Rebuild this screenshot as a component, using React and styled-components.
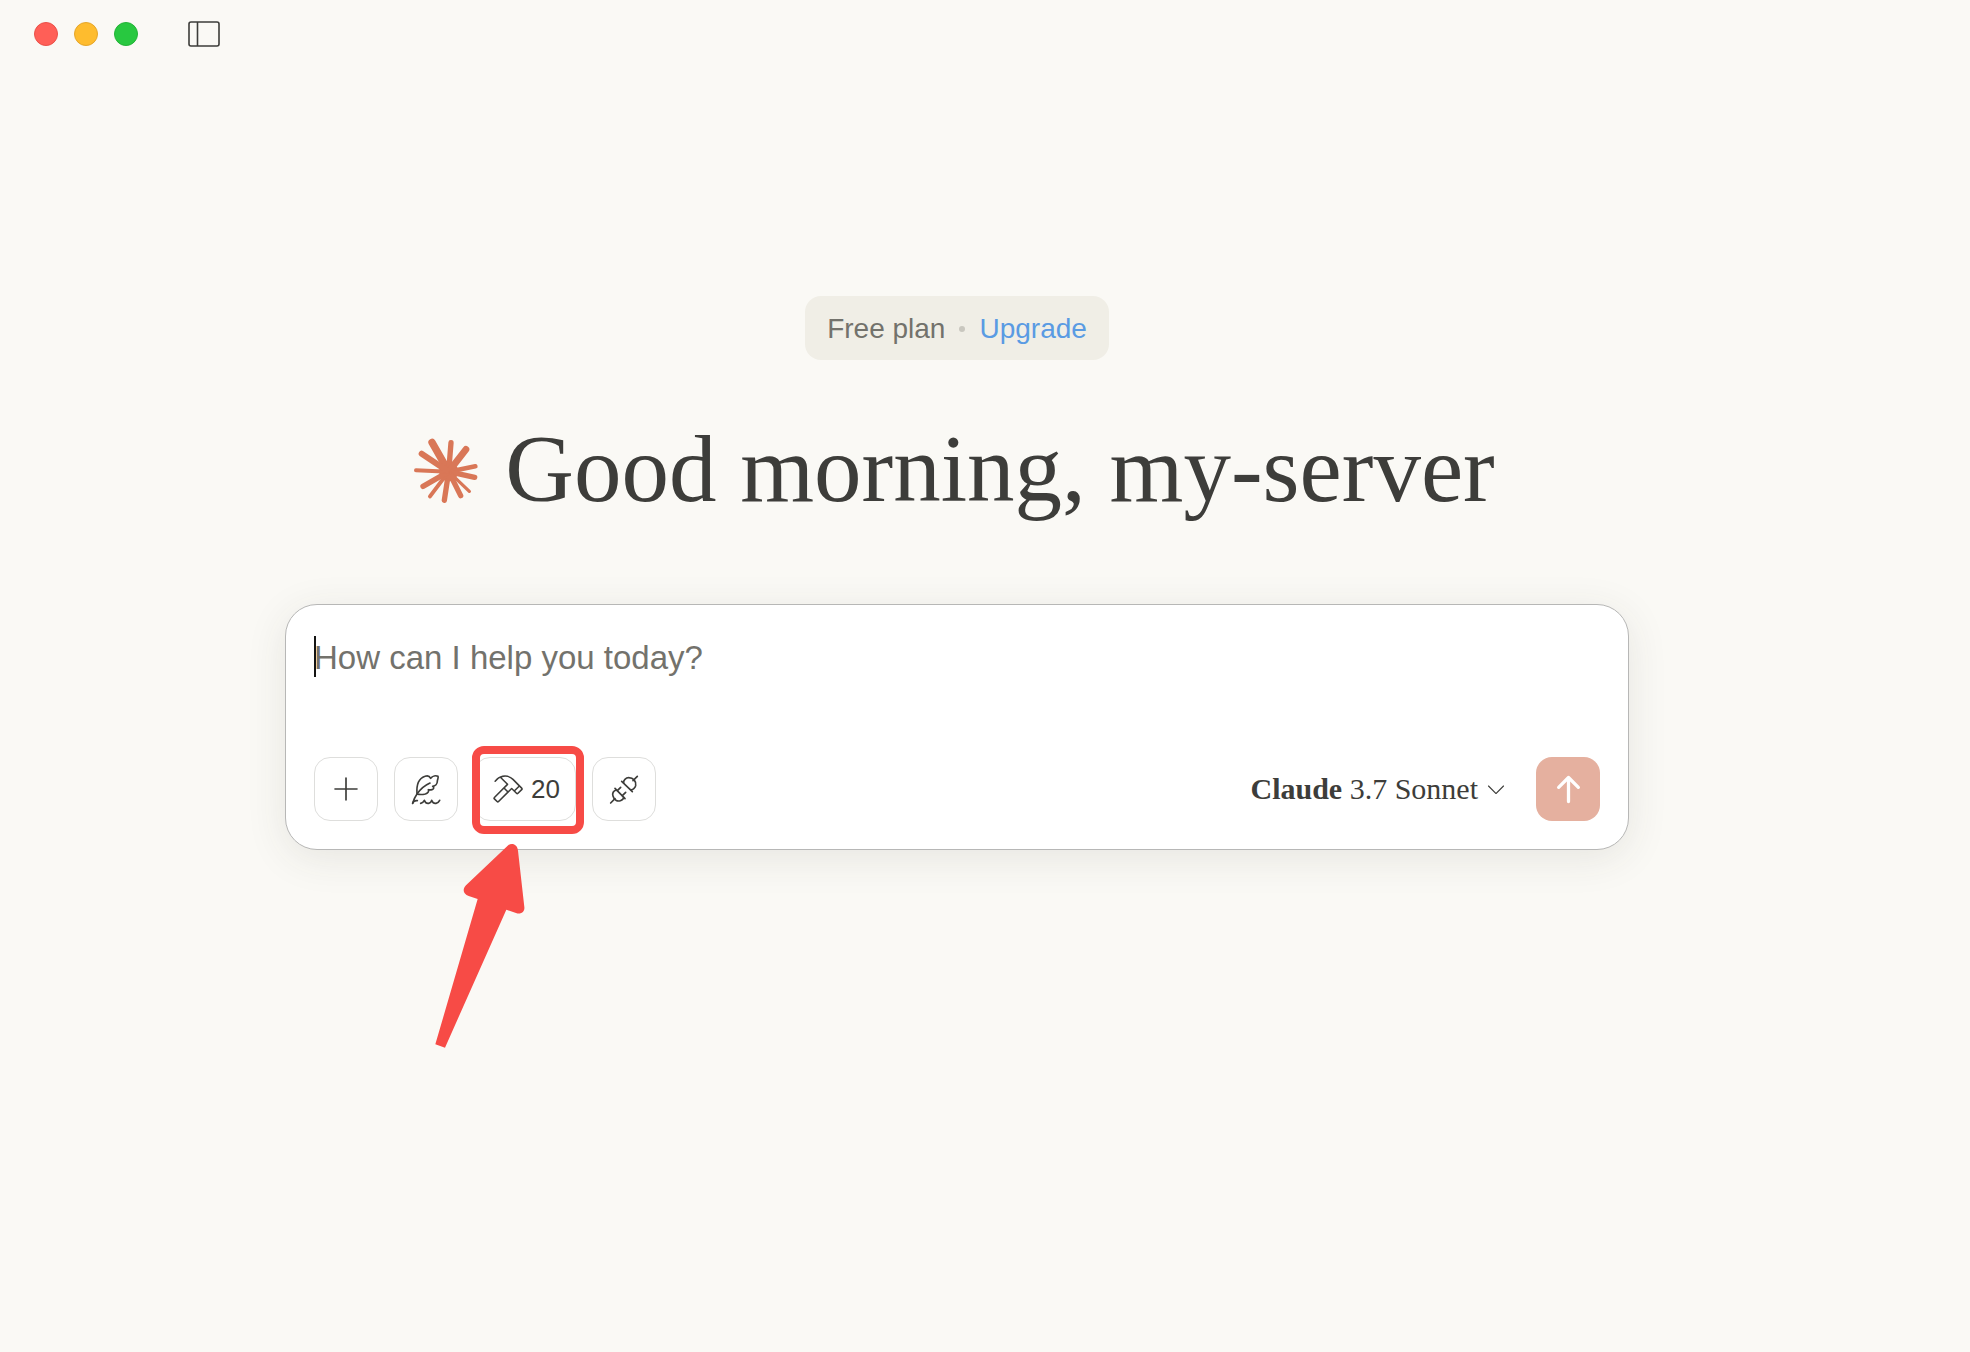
import React, { useState } from "react";
import styled, { createGlobalStyle } from "styled-components";
import { PiArrowUpBold, PiCaretDownLight, PiHammerLight } from "react-icons/pi";

const GlobalStyle = createGlobalStyle`
  * {
    box-sizing: border-box;
  }
  body {
    margin: 0;
    background-color: #faf9f5;
    color: #3d3d3a;
    font-family: "Liberation Sans", Arial, sans-serif;
  }
`;

const Window = styled.div`
  display: flex;
  flex-direction: column;
  min-height: 100vh;
`;

const TitleBar = styled.header`
  display: flex;
  align-items: center;
  height: 68px;
  padding: 0 34px;
`;

const Lights = styled.div`
  display: flex;
  gap: 16px;
  margin-right: 50px;
`;

const Light = styled.button`
  width: 24px;
  height: 24px;
  padding: 0;
  border: 1px solid ${(props) => props.$edge};
  border-radius: 50%;
  background-color: ${(props) => props.$color};
`;

const PlainButton = styled.button`
  display: flex;
  align-items: center;
  padding: 0;
  border: none;
  background: none;
  color: inherit;
  cursor: pointer;
`;

const Main = styled.main`
  display: flex;
  flex-direction: column;
  align-items: center;
  padding: 228px 56px 0 0;
`;

const PlanBadge = styled.div`
  display: flex;
  align-items: center;
  gap: 14px;
  height: 64px;
  padding: 2px 22px 0;
  border-radius: 16px;
  background-color: #f0eee6;
  color: #73726c;
  font-size: 28px;
`;

const Dot = styled.span`
  width: 6px;
  height: 6px;
  border-radius: 50%;
  background-color: #c9c7bf;
`;

const UpgradeLink = styled.a`
  color: #5a9be3;
  text-decoration: none;
`;

const Greeting = styled.div`
  display: flex;
  align-items: center;
  gap: 24px;
  margin: 48px 0 74px;
  padding-right: 6px;
`;

const Title = styled.h1`
  margin: 0;
  font-family: "Liberation Serif", "Times New Roman", serif;
  font-size: 95px;
  font-weight: 400;
  line-height: 122px;
  white-space: nowrap;
`;

const Composer = styled.form`
  width: 100%;
  max-width: 1344px;
  padding: 28px;
  border: 1px solid #b7b7b6;
  border-radius: 32px;
  background-color: #fff;
  box-shadow: 0 8px 40px rgba(61, 61, 50, 0.1);
`;

const Field = styled.div`
  position: relative;
  height: 124px;
`;

const Prompt = styled.textarea`
  display: block;
  width: 100%;
  height: 50px;
  padding: 0;
  border: none;
  outline: none;
  resize: none;
  background: none;
  color: #3d3d3a;
  font-family: inherit;
  font-size: 33px;
  line-height: 50px;

  &::placeholder {
    color: #73726c;
    opacity: 1;
  }
`;

const Caret = styled.span`
  position: absolute;
  top: 3px;
  left: 0;
  width: 2px;
  height: 41px;
  background-color: #141413;
`;

const Toolbar = styled.div`
  display: flex;
  align-items: center;
  justify-content: space-between;
`;

const Group = styled.div`
  display: flex;
  align-items: center;
  gap: ${(props) => props.$gap};
`;

const ToolButton = styled.button`
  display: flex;
  align-items: center;
  justify-content: center;
  gap: 8px;
  width: ${(props) => (props.$wide ? "102px" : "64px")};
  height: 64px;
  padding: 0;
  border: 1px solid #dededc;
  border-radius: 16px;
  background-color: #fff;
  color: #3d3d3a;
  font-family: inherit;
  font-size: 26px;
  cursor: pointer;
`;

const Marked = styled.div`
  position: relative;
`;

const MarkBox = styled.span`
  position: absolute;
  inset: -11px -8px -13px -2px;
  border: 8px solid #f74b46;
  border-radius: 12px;
  pointer-events: none;
`;

const MarkArrow = styled.svg`
  position: absolute;
  top: 83px;
  left: -44px;
  pointer-events: none;
`;

const ModelButton = styled(PlainButton)`
  gap: 6px;
  font-family: "Liberation Serif", "Times New Roman", serif;
  font-size: 30px;
`;

const SendButton = styled.button`
  display: flex;
  align-items: center;
  justify-content: center;
  width: 64px;
  height: 64px;
  padding: 0;
  border: none;
  border-radius: 16px;
  background-color: #e5b09f;
  color: #fff;
  cursor: pointer;
`;

// x and y of the tip, then the radius of its round end
const rays = [
  [97, 70, 11],
  [154, 71, 8],
  [199, 91, 10],
  [227, 142, 7],
  [225, 175, 8],
  [209, 217, 5],
  [183, 230, 8],
  [134, 244, 8],
  [91, 232, 6],
  [70, 202, 8],
  [49, 154, 6],
  [66, 104, 9],
];
const hub = [147, 158];

const rayPath = ([x, y, r]) => {
  const dx = x - hub[0];
  const dy = y - hub[1];
  const len = Math.hypot(dx, dy);
  const nx = -dy / len;
  const ny = dx / len;
  return `M${hub[0] + nx * r} ${hub[1] + ny * r} L${x + nx * r} ${y + ny * r}
    A${r} ${r} 0 0 0 ${x - nx * r} ${y - ny * r}
    L${hub[0] - nx * r} ${hub[1] - ny * r}Z`;
};

const Starburst = () => (
  <svg width="68" height="68" viewBox="40 48 204 204" fill="#d97757" aria-hidden="true">
    <circle cx={hub[0]} cy={hub[1]} r="29" />
    {rays.map((ray) => (
      <path key={ray[0]} d={rayPath(ray)} />
    ))}
  </svg>
);

const SidebarIcon = () => (
  <svg width="32" height="26" viewBox="0 0 32 26" fill="none" stroke="#3d3d3a" strokeWidth="1.6" aria-hidden="true">
    <rect x="1" y="1" width="30" height="24" rx="2" />
    <path d="M9.5 1v24" />
  </svg>
);

const LineIcon = ({ children }) => (
  <svg
    width="36"
    height="36"
    viewBox="0 0 108 108"
    fill="none"
    stroke="currentColor"
    strokeWidth="5"
    strokeLinecap="round"
    strokeLinejoin="round"
    aria-hidden="true"
  >
    {children}
  </svg>
);

const PlusIcon = () => (
  <LineIcon>
    <path d="M54 21v66M21 54h66" />
  </LineIcon>
);

const QuillIcon = () => (
  <LineIcon>
    <path d="M14 97C17 87 21 77 27 69C38 53 50 43 66 36" />
    <path d="M27 69C25 43 33 22 51 16C59 13 65 16 68 22C74 14 84 13 90 16C92 21 88 26 88 31C88 38 82 45 74 46C79 49 78 54 72 56C68 57 64 57 61 56C64 62 59 67 52 69C43 71 34 71 27 69Z" />
    <path d="M14 97C16 91 20 88 28 89" />
    <path d="M38 97C43 96 47 92 49 88C52 95 57 98 62 97C67 96 70 92 71 88C74 95 79 98 84 97C89 96 93 92 95 88" />
  </LineIcon>
);

const PlugIcon = () => (
  <LineIcon>
    <path d="M14 96l13-13M81 29l13-13" />
    <path d="M47 31l32 31" />
    <path d="M53 36C51 28 60 20 68 20C82 20 91 30 89 44C88 50 80 58 74 56" />
    <path d="M27 52l30 31" />
    <path d="M31 57C22 59 18 67 21 75C24 87 34 92 43 89C49 87 53 84 53 79" />
    <path d="M34 59l10-10M49 74l10-10" />
  </LineIcon>
);

export default function App() {
  const [text, setText] = useState("");

  const submit = (e) => {
    e.preventDefault();
    setText("");
  };

  return (
    <Window>
      <GlobalStyle />
      <TitleBar>
        <Lights>
          <Light $color="#ff5f57" $edge="#ea5149" aria-label="Close" />
          <Light $color="#febc2e" $edge="#e5a62a" aria-label="Minimize" />
          <Light $color="#28c840" $edge="#23b337" aria-label="Zoom" />
        </Lights>
        <PlainButton aria-label="Toggle sidebar">
          <SidebarIcon />
        </PlainButton>
      </TitleBar>
      <Main>
        <PlanBadge>
          <span>Free plan</span>
          <Dot />
          <UpgradeLink href="#upgrade">Upgrade</UpgradeLink>
        </PlanBadge>
        <Greeting>
          <Starburst />
          <Title>Good morning, my-server</Title>
        </Greeting>
        <Composer onSubmit={submit}>
          <Field>
            <Prompt
              aria-label="Message"
              placeholder="How can I help you today?"
              value={text}
              onChange={(e) => setText(e.target.value)}
            />
            {!text && <Caret />}
          </Field>
          <Toolbar>
            <Group $gap="16px">
              <ToolButton type="button" aria-label="Add content">
                <PlusIcon />
              </ToolButton>
              <ToolButton type="button" aria-label="Choose style">
                <QuillIcon />
              </ToolButton>
              <Marked>
                <ToolButton type="button" $wide aria-label="20 tools available">
                  <PiHammerLight size={33} />
                  20
                </ToolButton>
                <MarkBox />
                <MarkArrow width="100" height="210" viewBox="30 30 300 630" fill="#f74b46" aria-hidden="true">
                  <path d="M263 47L138 166C126 178 130 192 146 198L173 207L46 643L75 653L259 239L288 249C302 254 315 247 313 231L294 62C292 42 275 37 263 47Z" />
                </MarkArrow>
              </Marked>
              <ToolButton type="button" aria-label="Connectors">
                <PlugIcon />
              </ToolButton>
            </Group>
            <Group $gap="28px">
              <ModelButton type="button" aria-haspopup="listbox">
                <span>
                  <b>Claude</b> 3.7 Sonnet
                </span>
                <PiCaretDownLight size={24} color="#3d3d3a" />
              </ModelButton>
              <SendButton type="submit" aria-label="Send message">
                <PiArrowUpBold size={35} />
              </SendButton>
            </Group>
          </Toolbar>
        </Composer>
      </Main>
    </Window>
  );
}
